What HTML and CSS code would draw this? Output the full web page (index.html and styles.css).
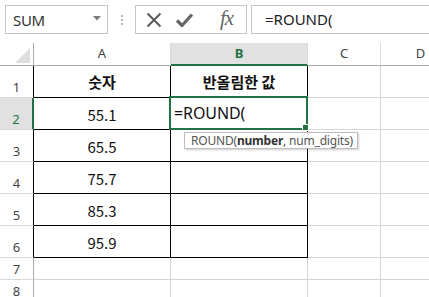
FILE: index.html
```html
<!DOCTYPE html>
<html>
<head>
<meta charset="utf-8">
<link rel="stylesheet" href="styles.css">
</head>
<body>
<div class="bar">
  <div class="namebox">
    <span class="name">SUM</span>
    <svg class="dd" width="8" height="5" viewBox="0 0 8 5"><path d="M0 0H8L4 4.5Z" fill="#7a7a7a"/></svg>
  </div>
  <div class="grip"><i></i><i></i><i></i></div>
  <div class="fbtns">
    <svg class="ic-x" width="16" height="16" viewBox="0 0 16 16"><path d="M1.5 1.5L14.5 14.5M14.5 1.5L1.5 14.5" stroke="#555" stroke-width="1.8" fill="none"/></svg>
    <svg class="ic-ok" width="17" height="14" viewBox="0 0 17 14"><path d="M1 7.5L6 12.5L16 1.5" stroke="#666" stroke-width="3.2" fill="none" stroke-linejoin="miter"/></svg>
    <span class="fx">fx</span>
  </div>
  <div class="formula">=ROUND(</div>
</div>

<div class="sheet">
  <div class="corner"><svg width="15" height="15" viewBox="0 0 15 15"><path d="M15 0V15H0Z" fill="#dedede"/></svg></div>
  <div class="ch">A</div>
  <div class="ch sel">B</div>
  <div class="ch">C</div>
  <div class="ch">D</div>

  <div class="rh tb">1</div>
  <div class="c tb head">숫자</div>
  <div class="c tb head">반올림한 값</div>
  <div class="c"></div>
  <div class="c"></div>

  <div class="rh tb rsel">2</div>
  <div class="c tb num">55.1</div>
  <div class="c tb"></div>
  <div class="c"></div>
  <div class="c"></div>

  <div class="rh tb">3</div>
  <div class="c tb num">65.5</div>
  <div class="c tb"></div>
  <div class="c"></div>
  <div class="c"></div>

  <div class="rh tb">4</div>
  <div class="c tb num">75.7</div>
  <div class="c tb"></div>
  <div class="c"></div>
  <div class="c"></div>

  <div class="rh tb">5</div>
  <div class="c tb num">85.3</div>
  <div class="c tb"></div>
  <div class="c"></div>
  <div class="c"></div>

  <div class="rh tb">6</div>
  <div class="c tb num">95.9</div>
  <div class="c tb"></div>
  <div class="c"></div>
  <div class="c"></div>

  <div class="rh">7</div>
  <div class="c"></div>
  <div class="c"></div>
  <div class="c"></div>
  <div class="c"></div>

  <div class="rh">8</div>
  <div class="c"></div>
  <div class="c"></div>
  <div class="c"></div>
  <div class="c"></div>

  <div class="active"><span class="edit">=ROUND(</span><i class="handle"></i></div>
  <div class="tip">ROUND(<b>number</b>, num_digits)</div>
</div>
</body>
</html>
```

FILE: styles.css
```css
html, body {
  margin: 0;
  padding: 0;
  background: #fff;
  overflow: hidden;
}
body {
  width: 429px;
  height: 297px;
  font-family: "Noto Sans", "Noto Sans CJK KR", sans-serif;
  color: #222;
}
.bar {
  display: flex;
  align-items: stretch;
  height: 29px;
  margin-top: 5px;
  padding-left: 5px;
}
.namebox {
  box-sizing: border-box;
  width: 103px;
  border: 1px solid #c6c6c6;
  display: flex;
  align-items: center;
  justify-content: space-between;
  padding: 0 6px 0 7px;
}
.name {
  font-size: 15px;
  color: #333;
  letter-spacing: -0.3px;
}
.dd { margin-top: -2px; }
.grip {
  width: 27px;
  display: flex;
  flex-direction: column;
  align-items: center;
  justify-content: center;
  gap: 2px;
}
.grip i {
  display: block;
  width: 2px;
  height: 2px;
  background: #b5b5b5;
}
.fbtns {
  box-sizing: border-box;
  width: 112px;
  border: 1px solid #c6c6c6;
  display: flex;
  align-items: center;
  padding-left: 10px;
}
.ic-x { margin-right: 14px; }
.ic-ok { margin-right: 27px; margin-top: 1px; }
.fx {
  font-family: "Liberation Serif", serif;
  font-style: italic;
  font-size: 21px;
  color: #666;
  letter-spacing: -1px;
  margin-top: -3px;
}
.formula {
  box-sizing: border-box;
  flex: 1;
  margin-left: 4px;
  border: 1px solid #c6c6c6;
  border-right: none;
  font-size: 15px;
  color: #222;
  padding-left: 13px;
  line-height: 26px;
}
.sheet {
  position: relative;
  width: 429px;
  height: 254px;
  overflow: hidden;
  margin-top: 9px;
  display: grid;
  grid-template-columns: 34px 137px 137px 73px 80px;
  grid-template-rows: 23px repeat(6, 32px) 22px 22px;
}
.sheet > div { box-sizing: border-box; }
.corner {
  border-right: 1px solid #ababab;
  border-bottom: 1px solid #ababab;
  display: flex;
  align-items: flex-end;
  justify-content: flex-end;
  padding: 0 3px 2px 0;
}
.ch {
  border-right: 1px solid #dadada;
  border-bottom: 1px solid #ababab;
  font-size: 13px;
  color: #444;
  text-align: center;
  line-height: 20px;
}
.ch.sel {
  background: #e1e1e1;
  border-bottom: 2px solid #217346;
  color: #217346;
  font-weight: bold;
}
.rh {
  border-right: 1px solid #ababab;
  border-bottom: 1px solid #d8d8d8;
  font-size: 13px;
  color: #444;
  display: flex;
  align-items: flex-end;
  justify-content: center;
  padding-bottom: 2px;
  line-height: 16px;
}
.rh.tb { border-right-color: #000; }
.rh.rsel {
  background: #e1e1e1;
  border-right: 2px solid #217346;
  color: #217346;
}
.c {
  border-right: 1px solid #d4d4d4;
  border-bottom: 1px solid #d4d4d4;
  display: flex;
  align-items: center;
  justify-content: center;
  font-family: "Noto Sans CJK KR", sans-serif;
  font-size: 15px;
  color: #111;
}
.c.tb {
  border-right-color: #000;
  border-bottom-color: #000;
}
.head { font-weight: bold; }
.num { padding-top: 1px; }
.active {
  position: absolute;
  left: 169px;
  top: 53px;
  width: 139px;
  height: 34px;
  border: 2px solid #217346;
  background: #fff;
  display: flex;
  align-items: center;
  padding-left: 3px;
}
.edit {
  font-size: 16px;
  color: #111;
  letter-spacing: -0.1px;
}
.handle {
  position: absolute;
  right: -3px;
  bottom: -3px;
  width: 5px;
  height: 5px;
  background: #217346;
  border: 1px solid #fff;
}
.tip {
  position: absolute;
  left: 184px;
  top: 89px;
  height: 17px;
  box-sizing: border-box;
  border: 1px solid #bdbdbd;
  box-shadow: 1px 1px 2px rgba(0,0,0,0.2);
  background: #fff;
  font-size: 12px;
  color: #555;
  line-height: 15px;
  padding: 0 4px 0 6px;
  letter-spacing: -0.2px;
  white-space: nowrap;
}
.tip b { color: #333; }
```
